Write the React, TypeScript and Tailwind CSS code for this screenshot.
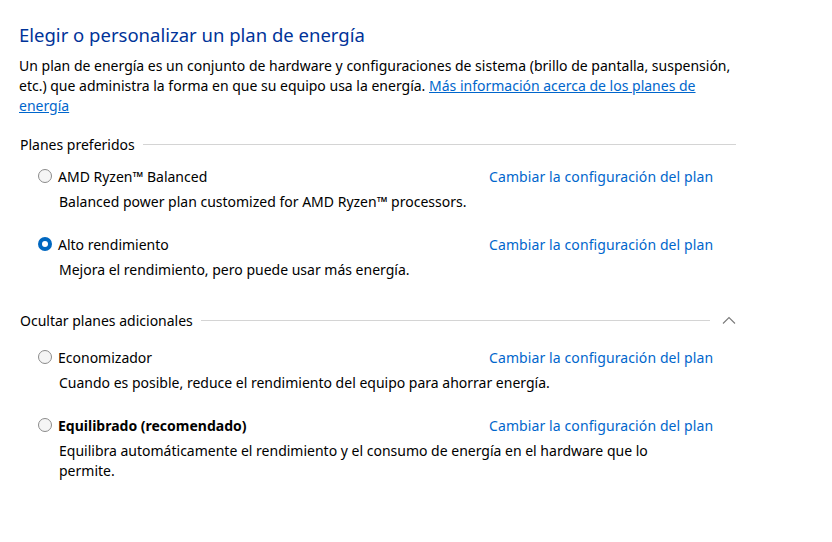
import type { ReactNode } from 'react';

const FONT = "font-['Segoe_UI','Noto_Sans',sans-serif]";

type Plan = {
  name: string;
  desc: ReactNode;
  selected?: boolean;
  bold?: boolean;
};

const preferred: Plan[] = [
  {
    name: 'AMD Ryzen™ Balanced',
    desc: 'Balanced power plan customized for AMD Ryzen™ processors.',
  },
  {
    name: 'Alto rendimiento',
    desc: 'Mejora el rendimiento, pero puede usar más energía.',
    selected: true,
  },
];

const extra: Plan[] = [
  {
    name: 'Economizador',
    desc: 'Cuando es posible, reduce el rendimiento del equipo para ahorrar energía.',
  },
  {
    name: 'Equilibrado (recomendado)',
    desc: (
      <>
        Equilibra automáticamente el rendimiento y el consumo de energía en el hardware que lo
        <br />
        permite.
      </>
    ),
    bold: true,
  },
];

function Radio({ checked }: { checked?: boolean }) {
  if (checked) {
    return (
      <span className="flex h-[14px] w-[14px] shrink-0 items-center justify-center rounded-full bg-[#0067c0]">
        <span className="h-[6px] w-[6px] rounded-full bg-white" />
      </span>
    );
  }
  return (
    <span className="h-[14px] w-[14px] shrink-0 rounded-full border border-[#8b8b8b] bg-[#f5f5f5]" />
  );
}

function PlanRow({ plan }: { plan: Plan }) {
  return (
    <div className="flex flex-col">
      <div className="flex h-[20px] items-center">
        <div className="flex w-[470px] items-center gap-[6px] pl-[19px]">
          <Radio checked={plan.selected} />
          <span className={plan.bold ? 'font-bold' : ''}>{plan.name}</span>
        </div>
        <a className="tracking-[0.1px] text-[#0066cc]">Cambiar la configuración del plan</a>
      </div>
      <p className="mt-[6px] pl-[40px] leading-[20px]">{plan.desc}</p>
    </div>
  );
}

function SectionHeader({ title, collapsible }: { title: string; collapsible?: boolean }) {
  return (
    <div className="flex h-[20px] w-[717px] items-center pl-[1px]">
      <span>{title}</span>
      <div className="ml-[8px] h-px flex-1 bg-[#d4d4d4]" />
      {collapsible && (
        <svg className="ml-[12px] shrink-0" width="14" height="8" viewBox="0 0 14 8">
          <path d="M1 7.5 L7 1.5 L13 7.5" fill="none" stroke="#7a7a7a" strokeWidth="1.1" />
        </svg>
      )}
    </div>
  );
}

export default function App() {
  return (
    <div className={`${FONT} h-[542px] w-[832px] bg-white pl-[19px] pt-[21px] text-[14px] text-black`}>
      <h1 className="text-[18.5px] leading-[28px] text-[#003399]">Elegir o personalizar un plan de energía</h1>
      <p className="mt-[7px] leading-[20px]">
        Un plan de energía es un conjunto de hardware y configuraciones de sistema (brillo de pantalla, suspensión,
        <br />
        etc.) que administra la forma en que su equipo usa la energía.{' '}
        <a className="text-[#0066cc] underline">
          Más información acerca de los planes de
          <br />
          energía
        </a>
      </p>

      <div className="mt-[18px]">
        <SectionHeader title="Planes preferidos" />
      </div>
      <div className="mt-[12px] flex flex-col gap-[22px]">
        {preferred.map((p) => (
          <PlanRow key={p.name} plan={p} />
        ))}
      </div>

      <div className="mt-[30px]">
        <SectionHeader title="Ocultar planes adicionales" collapsible />
      </div>
      <div className="mt-[17px] flex flex-col gap-[22px]">
        {extra.map((p) => (
          <PlanRow key={p.name} plan={p} />
        ))}
      </div>
    </div>
  );
}
